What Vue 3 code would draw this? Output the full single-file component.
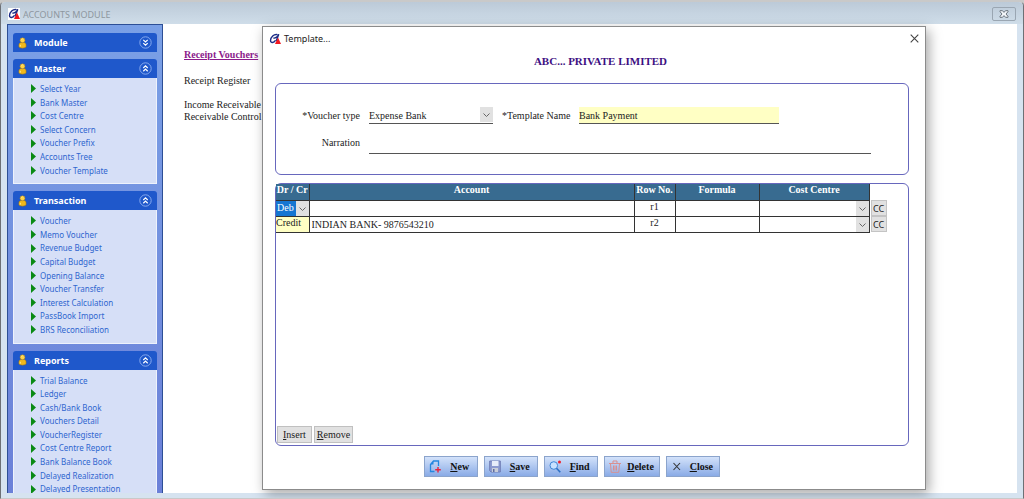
<script setup>
import { ref } from 'vue'

const groups = ref([
  { title: 'Module', open: false, items: [] },
  {
    title: 'Master',
    open: true,
    items: ['Select Year', 'Bank Master', 'Cost Centre', 'Select Concern', 'Voucher Prefix', 'Accounts Tree', 'Voucher Template'],
  },
  {
    title: 'Transaction',
    open: true,
    items: ['Voucher', 'Memo Voucher', 'Revenue Budget', 'Capital Budget', 'Opening Balance', 'Voucher Transfer', 'Interest Calculation', 'PassBook Import', 'BRS Reconciliation'],
  },
  {
    title: 'Reports',
    open: true,
    items: ['Trial Balance', 'Ledger', 'Cash/Bank Book', 'Vouchers Detail', 'VoucherRegister', 'Cost Centre Report', 'Bank Balance Book', 'Delayed Realization', 'Delayed Presentation'],
  },
])

const voucherType = ref('Expense Bank')
const templateName = ref('Bank Payment')
const narration = ref('')
const rows = ref([
  { side: 'Debit', account: '', no: 'r1', formula: '', centre: '' },
  { side: 'Credit', account: 'INDIAN BANK- 9876543210', no: 'r2', formula: '', centre: '' },
])
</script>

<template>
  <div class="window">
    <header class="titlebar">
      <svg class="logo" viewBox="0 0 12 12" aria-hidden="true">
        <rect width="12" height="12" fill="#fff" />
        <path d="M8.5 1.6C5 .6 1.4 4.5 1.5 7.6c.1 2.7 3.4 2.3 5-.2M9.8 1.2 7.2 8M4.4 5.3C7 5 9 3 9.8 1.2" fill="none" stroke="#1d2c86" stroke-width="1.4" />
        <path d="M9 4.5 12 11H6z" fill="#f01820" />
      </svg>
      <h1>ACCOUNTS MODULE</h1>
      <button class="win-close" type="button" aria-label="Close window">
        <svg viewBox="0 0 10 8" aria-hidden="true">
          <path d="M1 .7h2.500L5 2.400 6.500.7H9v1L7 4l2 2.300v1H6.500L5 5.600 3.500 7.300H1v-1L3 4 1 1.700z" fill="#f4f7fa" stroke="#6c757e" />
        </svg>
      </button>
    </header>

    <div class="body">
      <nav class="sidebar">
        <section v-for="g in groups" :key="g.title" class="group">
          <button class="group-head" type="button" :aria-expanded="g.open" @click="g.open = !g.open">
            <svg class="pawn" viewBox="0 0 10 13" aria-hidden="true">
              <path d="M1 11V8.500C1 7 2 6.300 3 6h4c1.200.4 2 1.200 2 2.500V11c-1.500 1.600-6.500 1.600-8 0z" fill="#f2b91d" stroke="#9b7219" stroke-width=".6" />
              <circle cx="5" cy="3.500" r="2.700" fill="#ffd448" stroke="#b3851c" stroke-width=".6" />
              <path d="M2.500 8.500v2M4 2.500l1-.6" stroke="#fff3b0" />
            </svg>
            <span>{{ g.title }}</span>
            <svg class="toggle" viewBox="0 0 13 13" aria-hidden="true">
              <circle cx="6.500" cy="6.500" r="5.700" fill="none" stroke="#86a9ee" />
              <path v-if="g.open" d="M4.300 6 6.500 3.900 8.700 6M4.300 9.200 6.500 7.100 8.700 9.200" fill="none" stroke="#fff" stroke-width="1.200" />
              <path v-else d="M4.300 3.900 6.500 6 8.700 3.900M4.300 7.100 6.500 9.200 8.700 7.100" fill="none" stroke="#fff" stroke-width="1.200" />
            </svg>
          </button>
          <ul v-if="g.open">
            <li v-for="item in g.items" :key="item">
              <svg viewBox="0 0 5 9" aria-hidden="true"><path d="M0 0 5 4.500 0 9z" fill="#0a8a14" /></svg>
              <a href="#">{{ item }}</a>
            </li>
          </ul>
        </section>
      </nav>

      <main class="content">
        <h2>Receipt Vouchers</h2>
        <p>Receipt Register</p>
        <p>Income Receivable Control<br />Receivable Control Account</p>
      </main>
    </div>

    <section class="dialog" role="dialog" aria-labelledby="dialog-title">
      <header class="dialog-bar">
        <svg class="logo" viewBox="0 0 12 12" aria-hidden="true">
          <path d="M8.5 1.6C5 .6 1.4 4.5 1.5 7.6c.1 2.7 3.4 2.3 5-.2M9.8 1.2 7.2 8M4.4 5.3C7 5 9 3 9.8 1.2" fill="none" stroke="#1d2c86" stroke-width="1.4" />
          <path d="M9 4.5 12 11H6z" fill="#f01820" />
        </svg>
        <span id="dialog-title">Template...</span>
        <button class="dialog-close" type="button" aria-label="Close dialog">
          <svg viewBox="0 0 9 9" aria-hidden="true"><path d="M.7.7 8.300 8.300M8.300.7.7 8.300" stroke="#444" stroke-width="1.100" /></svg>
        </button>
      </header>

      <h2 class="company">ABC... PRIVATE LIMITED</h2>

      <form class="panel form" @submit.prevent>
        <label for="vtype">*Voucher type</label>
        <span class="pick type-pick">
          <select id="vtype" v-model="voucherType">
            <option>Expense Bank</option>
          </select>
          <svg viewBox="0 0 13 15" aria-hidden="true"><path d="M3.500 6.500 6.500 9.500 9.500 6.500" /></svg>
        </span>
        <label for="tname">*Template Name</label>
        <input id="tname" v-model="templateName" class="name" type="text" />
        <label for="narr" class="narration-label">Narration</label>
        <input id="narr" v-model="narration" class="narration" type="text" />
      </form>

      <div class="panel grid-panel">
        <table>
          <colgroup>
            <col class="c-side" />
            <col />
            <col class="c-no" />
            <col class="c-formula" />
            <col class="c-centre" />
            <col class="c-cc" />
          </colgroup>
          <thead>
            <tr>
              <th>Dr / Cr</th>
              <th>Account</th>
              <th>Row No.</th>
              <th>Formula</th>
              <th>Cost Centre</th>
              <td class="bare"></td>
            </tr>
          </thead>
          <tbody>
            <tr v-for="(r, i) in rows" :key="r.no">
              <td v-if="i === 0">
                <span class="pick side-pick">
                  <select v-model="r.side" aria-label="Dr / Cr">
                    <option>Debit</option>
                    <option>Credit</option>
                  </select>
                  <svg viewBox="0 0 13 15" aria-hidden="true"><path d="M3.500 6.500 6.500 9.500 9.500 6.500" /></svg>
                </span>
              </td>
              <td v-else class="side">{{ r.side }}</td>
              <td><input v-model="r.account" type="text" :aria-label="'Account ' + r.no" /></td>
              <td class="no">{{ r.no }}</td>
              <td><input v-model="r.formula" type="text" :aria-label="'Formula ' + r.no" /></td>
              <td>
                <span class="pick">
                  <select v-model="r.centre" :aria-label="'Cost Centre ' + r.no">
                    <option value=""></option>
                  </select>
                  <svg viewBox="0 0 13 15" aria-hidden="true"><path d="M3.500 6.500 6.500 9.500 9.500 6.500" /></svg>
                </span>
              </td>
              <td class="bare"><button class="cc" type="button">CC</button></td>
            </tr>
          </tbody>
        </table>
        <div class="row-actions">
          <button type="button"><u>I</u>nsert</button>
          <button type="button"><u>R</u>emove</button>
        </div>
      </div>

      <footer class="actions">
        <button type="button">
          <svg viewBox="0 0 12 13" aria-hidden="true">
            <path d="M5.500 11.500H1.500V4.500L4.500 1h5v5" fill="none" stroke="#2387e0" stroke-width="1.300" />
            <path d="M1.500 4.500H4.500V1z" fill="#2387e0" />
            <path d="M9 7v5.500M6.200 9.700h5.600" stroke="#e8243c" stroke-width="1.400" />
          </svg>
          <span><u>N</u>ew</span>
        </button>
        <button type="button">
          <svg viewBox="0 0 12 13" aria-hidden="true">
            <path d="M.7 1h10.600v11H2L.7 10.700z" fill="#8d9bd0" stroke="#707eb5" />
            <path d="M3 1h6.500v5H3z" fill="#e7edfa" />
            <path d="M3 8h6v4H3z" fill="#c9ced9" />
            <path d="M4 9h1.500v3H4z" fill="#5f6da0" />
          </svg>
          <span><u>S</u>ave</span>
        </button>
        <button type="button">
          <svg viewBox="0 0 12 13" aria-hidden="true">
            <circle cx="4.800" cy="5.500" r="3.800" fill="#c9e1ff" stroke="#3e86d8" />
            <path d="M7.500 8.300 11.300 12.300" stroke="#2c6fc4" stroke-width="1.600" />
            <circle cx="10.500" cy="2" r="1.500" fill="#f0202c" />
          </svg>
          <span><u>F</u>ind</span>
        </button>
        <button type="button">
          <svg viewBox="0 0 12 13" aria-hidden="true">
            <path d="M0 3.500h12M4 3V1h4v2M1.500 3.500l.7 8.800h7.600l.7-8.800M4.500 5.500v5M6 5.500v5M7.500 5.500v5" fill="none" stroke="#d98f8f" />
          </svg>
          <span><u>D</u>elete</span>
        </button>
        <button type="button">
          <svg viewBox="0 0 12 13" aria-hidden="true"><path d="M2.500 3 9 10M9 3 2.500 10" stroke="#333" stroke-width="1.100" /></svg>
          <span><u>C</u>lose</span>
        </button>
      </footer>
    </section>
  </div>
</template>

<style>
body {
  margin: 0;
  background: #c9c9c9;
}
</style>

<style scoped>
* {
  box-sizing: border-box;
}
.window {
  position: relative;
  display: flex;
  flex-direction: column;
  height: 100vh;
  padding: 0 6px 5px;
  overflow: hidden;
  border: 1px solid #6d7075;
  border-top: 2px solid #c9c9c9;
  border-bottom: 1px solid #c9c9c9;
  border-radius: 6px 6px 0 0;
  background: #d6e3f0;
  color: #222;
  font-family: "Liberation Serif", serif;
  font-size: 10px;
}
button,
input,
select {
  margin: 0;
  padding: 0;
  border: 0;
  border-radius: 0;
  background: none;
  color: inherit;
  font: inherit;
}
h1,
h2,
p,
ul {
  margin: 0;
  padding: 0;
}
.titlebar {
  display: flex;
  flex: none;
  align-items: center;
  height: 22px;
  margin: 0 -6px;
  padding: 2px 7px 0 7px;
  background: linear-gradient(#bccad8, #cfdde9);
}
.logo {
  width: 12px;
  height: 12px;
}
.titlebar h1 {
  flex: 1;
  padding-left: 3px;
  color: #8e979f;
  font: 9px "Noto Sans", sans-serif;
}
.win-close {
  display: flex;
  align-items: center;
  justify-content: center;
  width: 24px;
  height: 14px;
  border: 1px solid #9aa6b2;
  border-radius: 2px;
}
.win-close svg {
  width: 10px;
  height: 8px;
}
.body {
  display: flex;
  flex: 1;
  min-height: 0;
  background: #fff;
}
.sidebar {
  display: flex;
  flex: none;
  flex-direction: column;
  gap: 7px;
  width: 156px;
  padding: 8px 5px 0;
  overflow: hidden;
  border: 1px solid #2d4f96;
  border-bottom: 0;
  background: linear-gradient(#7aa0e6, #6b80d8);
  font-family: "Noto Sans", sans-serif;
}
.group {
  flex: none;
}
.group-head {
  display: flex;
  align-items: center;
  width: 100%;
  height: 19px;
  padding: 0 5px;
  border-radius: 3px 3px 0 0;
  background: #1f58cb;
  color: #fff;
  font-size: 9px;
  font-weight: 700;
  text-align: left;
}
.group-head span {
  flex: 1;
  padding-left: 7px;
}
.pawn {
  width: 9px;
  height: 12px;
}
.toggle {
  width: 13px;
  height: 13px;
}
ul {
  padding: 4px 0 6px 17px;
  border: 1px solid #eef2fc;
  border-top: 0;
  background: #d6dff7;
  list-style: none;
}
li {
  display: flex;
  align-items: center;
  gap: 4px;
  font-size: 8px;
  line-height: 1.7;
}
li svg {
  width: 5px;
  height: 9px;
}
li a {
  color: #2f66cf;
  text-decoration: none;
  white-space: nowrap;
}
.content {
  padding: 25px 21px;
  line-height: 12px;
  white-space: nowrap;
}
.content h2 {
  color: #8b1a8b;
  font-size: 10px;
  text-decoration: underline;
}
.content p {
  margin-top: 14px;
}
.content p + p {
  margin-top: 12px;
}
.dialog {
  position: absolute;
  inset: 24px 97px 8px 261px;
  display: flex;
  flex-direction: column;
  padding: 0 16px 12px 12px;
  border: 1px solid #8b8b8b;
  background: #fff;
  box-shadow: 3px 4px 12px rgba(0, 0, 0, 0.35);
}
.dialog-bar {
  display: flex;
  align-items: center;
  height: 23px;
  margin: 0 -10px 0 -6px;
  font: 9px "Noto Sans", sans-serif;
}
.dialog-bar span {
  flex: 1;
  padding-left: 3px;
}
.dialog-close {
  display: flex;
}
.dialog-close svg {
  width: 9px;
  height: 9px;
}
.company {
  height: 33px;
  padding: 4px 0 0 17px;
  color: #3d0f82;
  font-size: 11px;
  line-height: 14px;
  text-align: center;
}
.panel {
  border: 1px solid #6767bd;
  border-radius: 6px;
}
.form {
  display: grid;
  flex: none;
  grid-template-columns: 84px 124px 68px 12fr 5fr;
  grid-auto-rows: 17px;
  column-gap: 9px;
  row-gap: 13px;
  align-items: center;
  padding: 23px 37px 20px 0;
}
.form label {
  text-align: right;
  white-space: nowrap;
}
.form .name {
  width: 100%;
  height: 17px;
  border-bottom: 1px solid #555;
  background: #ffffc4;
}
.form .narration-label {
  grid-column: 1;
  align-self: start;
}
.form .narration {
  grid-column: 2 / -1;
  height: 17px;
  border-bottom: 1px solid #555;
}
.pick {
  position: relative;
  display: block;
  height: 15px;
}
.pick select {
  display: block;
  width: 100%;
  height: 100%;
  padding-right: 13px;
  appearance: none;
}
.pick svg {
  position: absolute;
  top: 0;
  right: 0;
  width: 13px;
  height: 15px;
  background: #e1e1e1;
  fill: none;
  stroke: #666;
  pointer-events: none;
}
.type-pick {
  height: 17px;
  border-bottom: 1px solid #555;
}
.pick.side-pick select {
  padding-right: 15px;
  padding-left: 1px;
  background: #1576d2;
  color: #fff;
}
.grid-panel {
  display: flex;
  flex: 1;
  flex-direction: column;
  justify-content: space-between;
  margin-top: 8px;
  padding-right: 22px;
}
table {
  width: 100%;
  border-collapse: collapse;
  table-layout: fixed;
}
.c-side {
  width: 33px;
}
.c-no {
  width: 41px;
}
.c-formula {
  width: 84px;
}
.c-centre {
  width: 110px;
}
.c-cc {
  width: 17px;
}
th,
td {
  height: 16px;
  padding: 0;
  border: 1px solid #333;
  line-height: 12px;
  white-space: nowrap;
}
th {
  border-top: 0;
  background: #386b90;
  color: #fff;
  vertical-align: top;
}
thead th:first-child,
tbody td:first-child {
  border-left: 0;
}
td input {
  display: block;
  width: 100%;
  height: 15px;
  padding-left: 2px;
}
.side {
  background: #ffffc4;
  vertical-align: top;
}
.no {
  text-align: center;
  vertical-align: top;
}
.bare {
  border: 0;
}
.cc {
  display: block;
  width: 16px;
  height: 16px;
  margin-left: 1px;
  border: 1px solid #c4c4c4;
  background: #e1e1e1;
  font: 9px "Noto Sans", sans-serif;
}
.row-actions {
  display: flex;
  gap: 2px;
  padding: 0 1px 2px;
}
.row-actions button {
  height: 17px;
  padding: 0 5px;
  border: 1px solid #c0c0c0;
  background: #e1e1e1;
}
.row-actions button:last-child {
  padding: 0 2px;
}
.actions {
  display: flex;
  flex: none;
  justify-content: center;
  gap: 6px;
  padding: 10px 40px 0 0;
}
.actions button {
  display: flex;
  align-items: center;
  min-width: 54px;
  height: 21px;
  padding: 0 5px 0 4px;
  border: 1px solid #8ba4cc;
  background: linear-gradient(#d3e2fa, #8aabe6);
  color: #111;
  font-weight: 700;
}
.actions svg {
  width: 12px;
  height: 13px;
}
.actions span {
  flex: 1;
  padding-left: 6px;
  text-align: center;
}
</style>
